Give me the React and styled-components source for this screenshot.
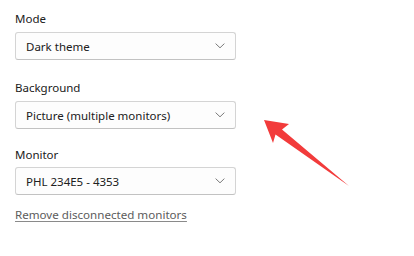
import styled, { createGlobalStyle } from "styled-components";

const Global = createGlobalStyle`
  html, body {
    margin: 0;
    padding: 0;
    background: #ffffff;
  }
  body {
    font-family: "Noto Sans", "Open Sans", sans-serif;
    color: #1b1b1b;
  }
`;

const Page = styled.div`
  position: relative;
  width: 414px;
  height: 256px;
  padding: 11px 0 0 15px;
  box-sizing: border-box;
  display: flex;
  flex-direction: column;
`;

const Section = styled.div`
  display: flex;
  flex-direction: column;
  margin-top: ${(p) => p.$top || 0}px;
`;

const Label = styled.div`
  font-size: 11.5px;
  line-height: 16px;
  height: 16px;
  color: #202020;
  margin-bottom: ${(p) => p.$gap || 5}px;
`;

const Select = styled.div`
  display: flex;
  align-items: center;
  justify-content: space-between;
  width: 221px;
  height: 28px;
  box-sizing: border-box;
  border: 1px solid #d4d4d4;
  border-bottom-color: #c2c2c2;
  border-radius: 3px;
  padding: 0 10px 0 10px;
  font-size: 11.5px;
  color: #202020;
  background: #fdfdfd;
`;

const Chevron = styled.svg`
  width: 10px;
  height: 6px;
  flex: none;
`;

const LinkText = styled.a`
  margin-top: ${(p) => p.$top || 0}px;
  font-size: 11.6px;
  line-height: 16px;
  color: #5c5c5c;
  text-decoration: underline;
  text-decoration-color: #8a8a8a;
  text-underline-offset: 2px;
  cursor: pointer;
  align-self: flex-start;
`;

const Arrow = styled.svg`
  position: absolute;
  left: 0;
  top: 0;
  width: 414px;
  height: 256px;
  pointer-events: none;
`;

const Dropdown = ({ value }) => (
  <Select>
    <span>{value}</span>
    <Chevron viewBox="0 0 10 6">
      <path d="M0.6 0.6 L5 4.8 L9.4 0.6" fill="none" stroke="#7a7a7a" strokeWidth="1" />
    </Chevron>
  </Select>
);

export default function App() {
  return (
    <>
      <Global />
      <Page>
        <Section>
          <Label>Mode</Label>
          <Dropdown value="Dark theme" />
        </Section>
        <Section $top={20}>
          <Label>Background</Label>
          <Dropdown value="Picture (multiple monitors)" />
        </Section>
        <Section $top={18}>
          <Label $gap={4}>Monitor</Label>
          <Dropdown value="PHL 234E5 - 4353" />
        </Section>
        <LinkText $top={12}>Remove disconnected monitors</LinkText>
        <Arrow viewBox="0 0 414 256">
          <polygon
            points="264,120 289,124 282,129.5 349,186 275.5,134.5 273,143"
            fill="#f23b3b"
          />
        </Arrow>
      </Page>
    </>
  );
}
